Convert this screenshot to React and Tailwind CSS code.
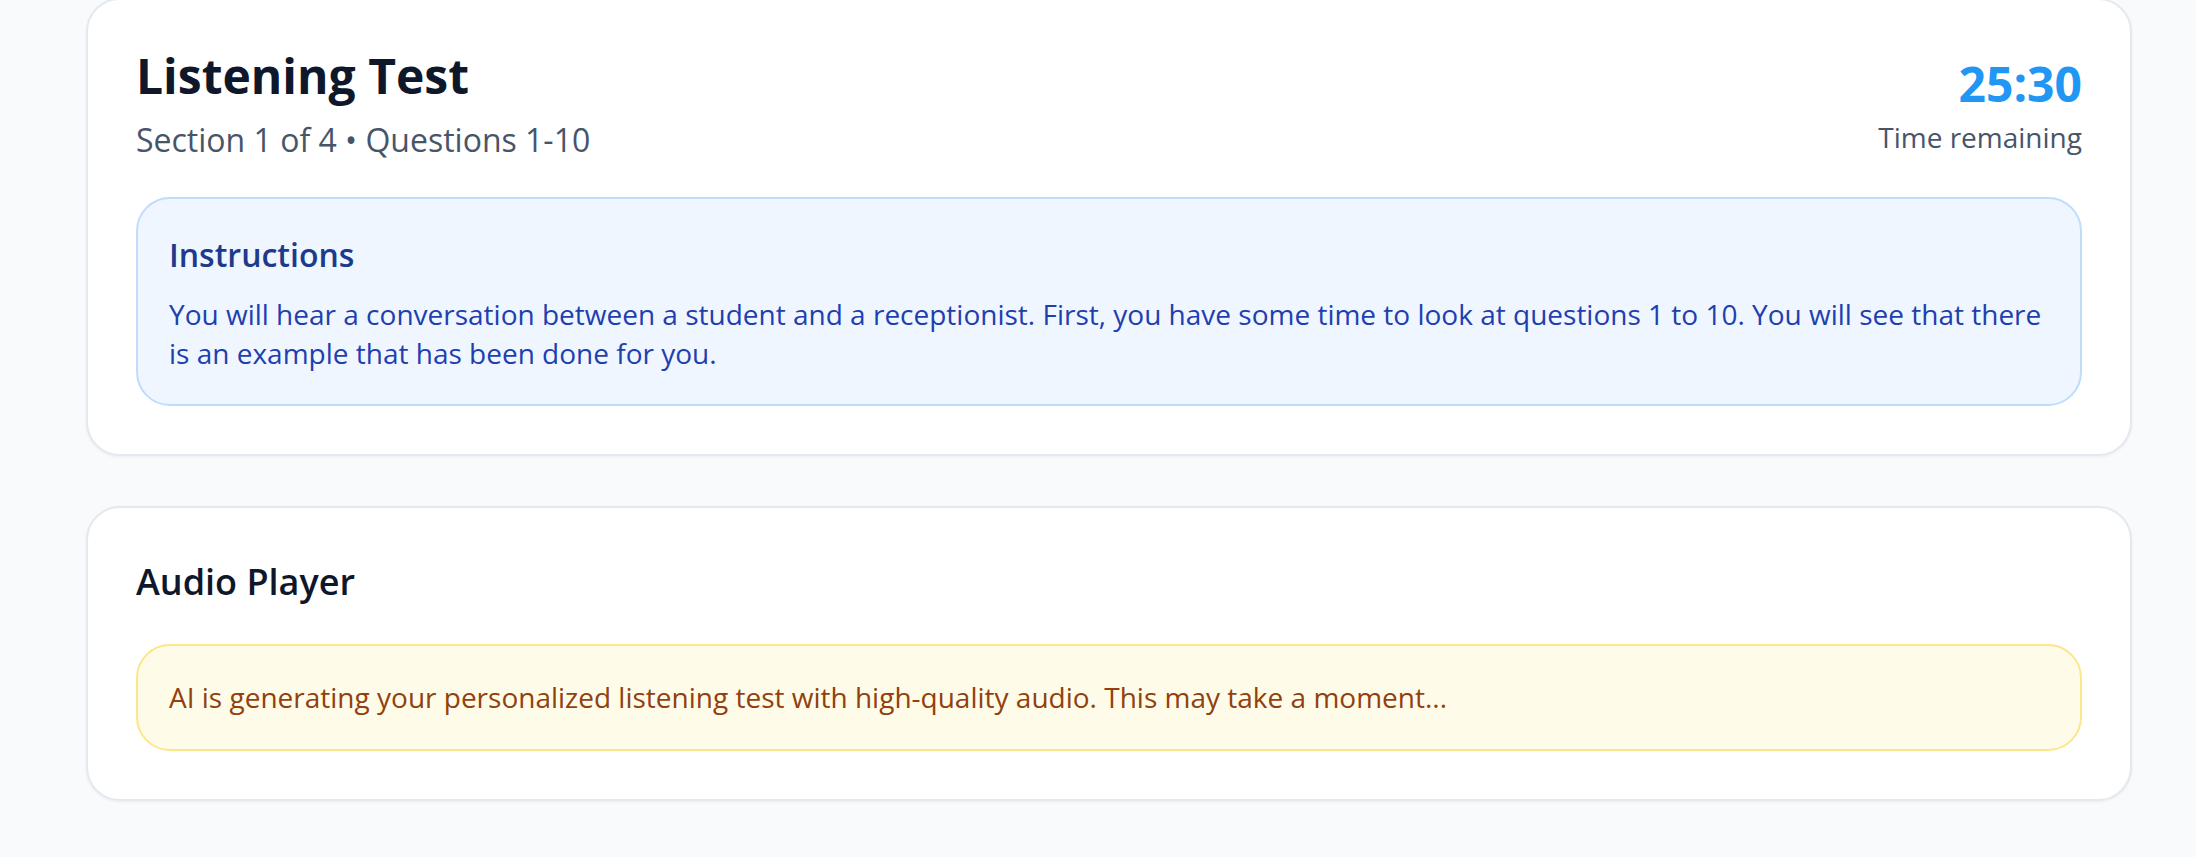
import React from 'react'

export default function App() {
  return (
    <div className="min-h-screen bg-[#f8fafc] pl-[86px] pr-[64px] font-['Open_Sans',sans-serif] overflow-hidden">
      <div className="-mt-[2px] bg-white border-2 border-[#e4e9f0] rounded-[34px] shadow-[0_1px_3px_rgba(15,23,42,0.06)] px-[48px] pt-[47px] pb-[48px]">
        <div className="flex items-start justify-between">
          <div>
            <h1 className="text-[48px] leading-[58px] font-bold text-[#0f172a]">Listening Test</h1>
            <p className="mt-[13px] text-[32px] leading-[44px] text-[#475569]">
              Section 1 of 4 • Questions 1-10
            </p>
          </div>
          <div className="pt-[8px] text-right">
            <div className="text-[48px] leading-[58px] font-bold text-[#2196f3]">25:30</div>
            <div className="mt-[5px] text-[28px] leading-[39px] text-[#475569]">Time remaining</div>
          </div>
        </div>

        <div className="mt-[35px] bg-[#eff6ff] border-2 border-[#bfdbfe] rounded-[34px] px-[31px] pt-[35px] pb-[31px]">
          <h3 className="text-[32px] leading-[42px] font-semibold text-[#1e3a8a]">Instructions</h3>
          <p className="mt-[19px] text-[28px] leading-[39.2px] text-[#1e40af]">
            You will hear a conversation between a student and a receptionist. First, you have some time to look at
            questions 1 to 10. You will see that there is an example that has been done for you.
          </p>
        </div>
      </div>

      <div className="mt-[50px] bg-white border-2 border-[#e4e9f0] rounded-[34px] shadow-[0_1px_3px_rgba(15,23,42,0.06)] px-[48px] pt-[50px] pb-[48px]">
        <h2 className="text-[36px] leading-[48px] font-semibold text-[#0f172a]">Audio Player</h2>
        <div className="mt-[38px] bg-[#fefce8] border-2 border-[#fde68a] rounded-[34px] px-[31px] pt-[32px] pb-[31px]">
          <p className="text-[28px] leading-[39.2px] text-[#92400e]">
            AI is generating your personalized listening test with high-quality audio. This may take a moment...
          </p>
        </div>
      </div>
    </div>
  )
}
